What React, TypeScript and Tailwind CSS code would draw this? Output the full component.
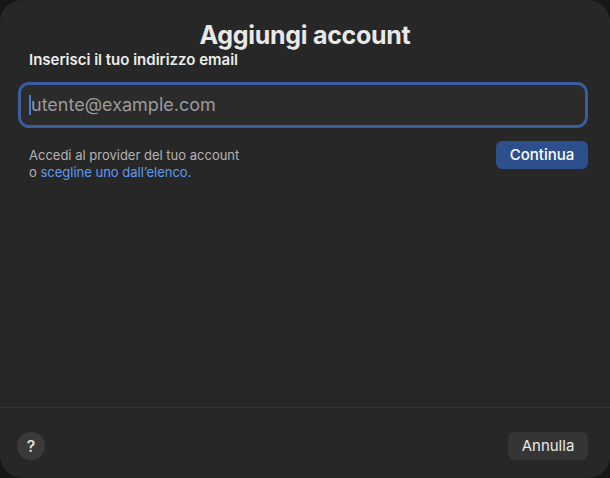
import React from "react";

export default function App() {
  return (
    <div className="w-[610px] h-[478px] bg-[#161616] overflow-hidden" style={{ fontFamily: "Inter, 'Noto Sans', sans-serif" }}>
      <div className="w-[610px] h-[478px] bg-[#272727] rounded-[22px] flex flex-col">
        <div className="flex-1 flex flex-col pl-[18px] pr-[22px]">
          <h1 className="text-center text-[25px] font-bold text-[#e8e8e8] mt-[18px] leading-[34px] tracking-[-0.3px] pl-[4px]">Aggiungi account</h1>
          <div className="text-[15px] font-semibold text-[#ececec] ml-[11px] mt-[-1px] leading-[18px]">Inserisci il tuo indirizzo email</div>
          <div className="mt-[13px] h-[46px] rounded-[11px] border-[3px] border-[#3a5d9e] bg-[#2b2b2b] flex items-center pl-[8px]">
            <div className="w-[2px] h-[20px] bg-[#4a7bdc]" />
            <span className="text-[18px] text-[#9a9a9a] leading-none">utente@example.com</span>
          </div>
          <div className="flex justify-between mt-[13px]">
            <div className="ml-[11px] mt-[6px] text-[13px] leading-[17px] text-[#b3b3b3]">
              <div>Accedi al provider del tuo account</div>
              <div>o <span className="text-[#5d9bf2]">scegline uno dall’elenco.</span></div>
            </div>
            <button className="w-[92px] h-[28px] rounded-[6px] bg-[#2d4f8c] text-[15px] text-white font-medium">Continua</button>
          </div>
        </div>
        <div className="h-px bg-[#353535]" />
        <div className="h-[70px] flex items-center justify-between pl-[17px] pr-[22px] pt-[6px]">
          <button className="w-[28px] h-[28px] rounded-full bg-[#3a3a3a] text-[#e8e8e8] text-[16px] font-medium flex items-center justify-center">?</button>
          <button className="w-[80px] h-[28px] rounded-[6px] bg-[#353535] text-[15px] text-[#e8e8e8]">Annulla</button>
        </div>
      </div>
    </div>
  );
}
